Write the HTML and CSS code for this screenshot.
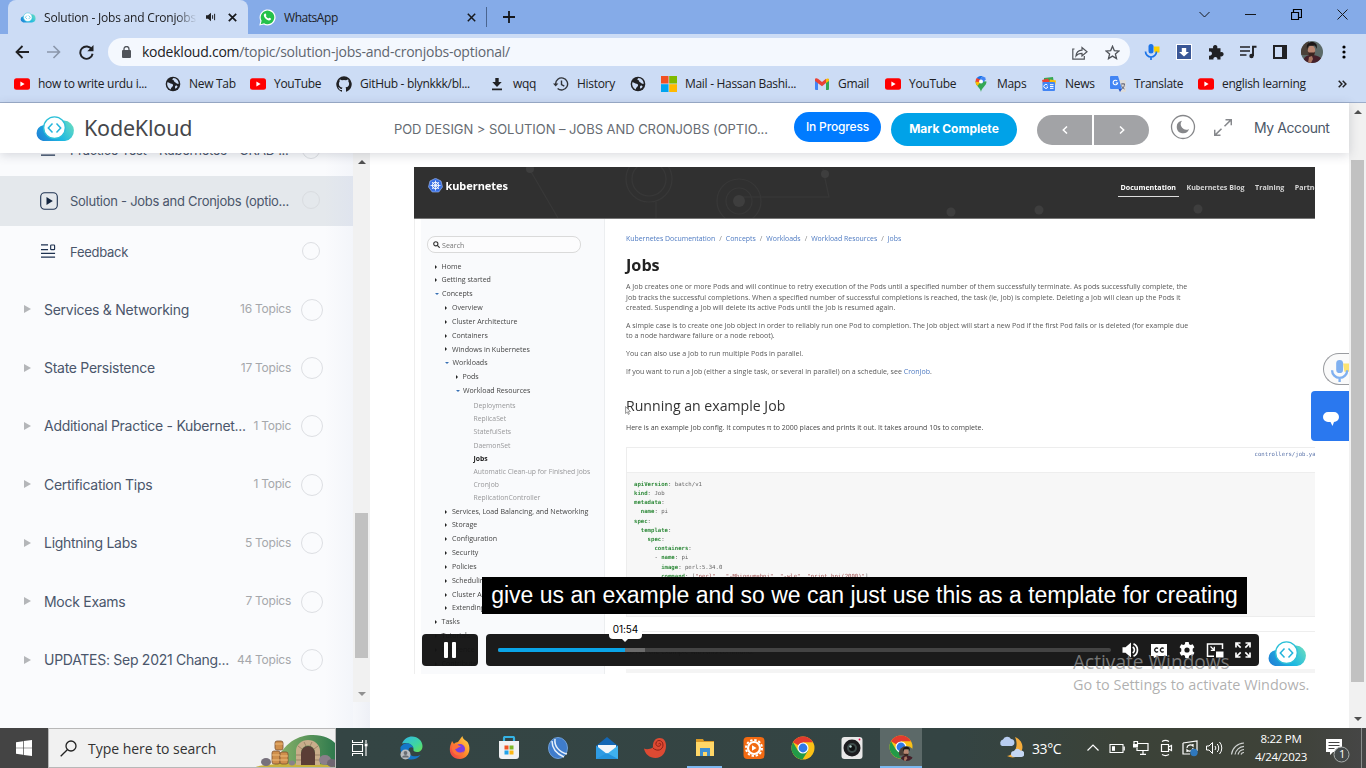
FILE: index.html
```html
<!DOCTYPE html>
<html lang="en">
<head>
<meta charset="utf-8">
<title>Solution - Jobs and Cronjobs</title>
<link rel="stylesheet" href="styles.css">
</head>
<body>
<svg class="defs" aria-hidden="true">
  <defs>
    <linearGradient id="gCloud" x1="0" y1=".7" x2="1" y2=".3"><stop offset="0" stop-color="#2084d6"/><stop offset=".5" stop-color="#1cb8e2"/><stop offset="1" stop-color="#62d9c4"/></linearGradient>
    <linearGradient id="gEdge" x1="0" y1="0" x2="1" y2="1"><stop offset="0" stop-color="#2fb6e8"/><stop offset=".6" stop-color="#3fd6a0"/><stop offset="1" stop-color="#6be04d"/></linearGradient>
    <linearGradient id="gFox" x1="1" y1="0" x2="0" y2="1"><stop offset="0" stop-color="#ffe14a"/><stop offset=".5" stop-color="#ff8a2a"/><stop offset="1" stop-color="#f0304e"/></linearGradient>
    <linearGradient id="gHill" x1="0" x2="1"><stop offset="0" stop-color="#8fb66b"/><stop offset="1" stop-color="#2f7a4d"/></linearGradient>
    <symbol id="cloud" viewBox="0 0 40 25">
      <path d="M8 25A8 8 0 0 1 8 9.300L29 4.500A10.300 10.300 0 0 1 30 25z" fill="url(#gCloud)"/>
      <circle cx="19.500" cy="11.700" r="10.800" fill="#fff" stroke="#2cc0d8" stroke-width="1.300"/>
      <path d="M17.500 7.500 13.300 12l4.200 4.500M21.500 7.500l4.200 4.500-4.200 4.500" fill="none" stroke="#22b4dc" stroke-width="1.500"/>
    </symbol>
    <symbol id="yt" viewBox="0 0 16 16"><rect y="2.300" width="16" height="11.400" rx="2.500" fill="#f00"/><path d="M6.400 5.600v4.800l4.200-2.400z" fill="#fff"/></symbol>
    <symbol id="globe" viewBox="0 0 16 16"><circle cx="8" cy="8" r="7.300" fill="#202124"/><path d="M2.300 6.300c2 .2 2.700 1.200 4.200 1.500 1.300.3 1.800 1 1.500 2-.4 1.300-2 1.400-2.300 3.700C3 12 1.600 9.500 2.300 6.300zM8.500 2c-1.500 1-1.400 2 0 2.300 1 .3.200 1.500 1.500 1.900 1.500.4 1.200 1.700 3.800 1.600C13.600 4.800 11.500 2.200 8.500 2zM11 9.500c1 0 1.700.6 1.500 1.300-.2.800-1 1.500-2 1.900-.8-.9-.7-3 .5-3.200z" fill="#ccdcf5"/></symbol>
    <symbol id="chrome" viewBox="0 0 24 24">
      <circle cx="12" cy="12" r="11.500" fill="#fbc116"/>
      <path d="M2 6.300A11.500 11.500 0 0 0 11.500 23.500L17 14.800 12 12 7 14.800z" fill="#229a48"/>
      <path d="M12 12 2 6.300A11.500 11.500 0 0 1 22 6.300H12z" fill="#e33b2e"/>
      <circle cx="12" cy="12" r="5.500" fill="#fff"/><circle cx="12" cy="12" r="4.400" fill="#3079e8"/>
    </symbol>
    <symbol id="face" viewBox="0 0 22 22">
      <clipPath id="fc"><circle cx="11" cy="11" r="11"/></clipPath>
      <g clip-path="url(#fc)"><path d="M0 0h22v22H0z" fill="#5c6a68"/><path d="M0 0h8v14H0z" fill="#4a4038"/><path d="M2 22c0-6 4-8 8-8s12 1 12 8z" fill="#45202a"/><ellipse cx="10.500" cy="9.500" rx="3.700" ry="5" fill="#b98772"/><path d="M6 8c-1-5 2-7 5-7s6 2 4.500 7c-.5-2-1-3-2-3.500-2 .6-5 .2-6 .3z" fill="#1b1616"/><path d="M7 10.500c1 1.500 2 1 3.500 1S13 12 14 10.500c0 3.500-1.500 5-3.500 5S7 14 7 10.500z" fill="#3a2420"/><path d="M8 16l3-1 1 3-2 4H7z" fill="#a87560"/></g>
    </symbol>
    <symbol id="mic" viewBox="0 0 16 16"><path d="M9.500 2.500h6v6h-5z" fill="#fdd000"/><rect x="4.500" y="0" width="5" height="9.500" rx="2.500" fill="#1a73e8"/><path d="M1.500 7.500a5.500 5.500 0 0 0 11 0M7 13v3" fill="none" stroke="#1a73e8" stroke-width="1.700"/></symbol>
    <symbol id="quiz" viewBox="0 0 16 16"><path d="M0 1h7.500M0 6h7.500M0 10h15M0 14h15" stroke="#1d3150" stroke-width="1.300"/><rect x="10.300" y="1" width="4.200" height="5" rx=".8" fill="none" stroke="#1d3150" stroke-width="1.200"/></symbol>
  </defs>
</svg>
<div class="screen">

  <div class="tabstrip">
    <div class="tab tab-active">
      <svg class="tab-fav" width="16" height="11"><use href="#cloud"/></svg>
      <span class="tab-title fade">Solution - Jobs and Cronjobs</span>
      <svg class="tab-audio" width="11" height="10" viewBox="0 0 11 10"><path d="M0 3.300h2L5 .7v8.600L2 6.700H0z" fill="#202124"/><path d="M6.600 3.200v3.600M8.600 1.800v6.400" stroke="#202124" stroke-width="1"/></svg>
      <svg class="tab-x" width="9" height="9" viewBox="0 0 9 9"><path d="M.8.800l7.400 7.400M8.200.8.800 8.200" stroke="#16181c" stroke-width="1.700"/></svg>
    </div>
    <div class="tab tab-second">
      <svg width="17" height="17" viewBox="0 0 17 17"><path d="M.3 16.500 1.400 12A8 8 0 1 1 4.800 15.500z" fill="#fff"/><path d="M1.700 15.200l.9-3.400a6.800 6.800 0 1 1 2.500 2.500z" fill="#25c14a"/><path d="M5.300 5c.5-.8 1.200-.7 1.500-.2l.6 1.400-.6.900c.6 1.200 1.400 1.900 2.600 2.400l.9-.8 1.700.8c.2 1.500-1.200 2.100-2.300 1.900C7.200 11 5 8.600 4.800 6.600c0-.7.200-1.200.5-1.600z" fill="#fff"/></svg>
      <span class="tab-title">WhatsApp</span>
      <svg class="tab-x2" width="9" height="9" viewBox="0 0 9 9"><path d="M.8.800l7.400 7.400M8.200.8.800 8.200" stroke="#16181c" stroke-width="1.500"/></svg>
    </div>
    <svg class="newtab" width="12" height="12" viewBox="0 0 12 12"><path d="M6 0v12M0 6h12" stroke="#16181c" stroke-width="1.800"/></svg>
    <div class="winbtns">
      <svg width="11" height="11" viewBox="0 0 11 11"><path d="M.5 3l5 5 5-5" fill="none" stroke="#16181c"/></svg>
      <svg width="11" height="11" viewBox="0 0 11 11"><path d="M0 5.500h11" stroke="#16181c"/></svg>
      <svg width="11" height="11" viewBox="0 0 11 11"><path d="M.5 3.500h7v7h-7zM2.500 3.500v-3h8v8H7.500" fill="none" stroke="#000" stroke-width="1.200"/></svg>
      <svg width="11" height="11" viewBox="0 0 11 11"><path d="M.5.500l10 10M10.500.500l-10 10" stroke="#16181c"/></svg>
    </div>
  </div>

  <div class="toolbar">
    <svg class="nav-ic" width="14" height="14" viewBox="0 0 14 14"><path d="M14 7H1.500M7.500 1 1.500 7l6 6" fill="none" stroke="#202124" stroke-width="1.800"/></svg>
    <svg class="nav-ic" width="14" height="14" viewBox="0 0 14 14"><path d="M0 7h12.500M6.500 1l6 6-6 6" fill="none" stroke="#8a96aa" stroke-width="1.600"/></svg>
    <svg class="nav-ic" width="15" height="15" viewBox="0 0 15 15"><path d="M12.800 4.400A6.200 6.200 0 1 0 13.600 8.800" fill="none" stroke="#202124" stroke-width="1.900"/><path d="M14.500 0v6.200H8.300z" fill="#202124"/></svg>
    <div class="omnibox">
      <svg width="9" height="12" viewBox="0 0 9 12"><rect y="4" width="9" height="8" rx="1" fill="#50545a"/><path d="M2 4.500V3a2.500 2.500 0 0 1 5 0v1.500" fill="none" stroke="#50545a" stroke-width="1.300"/></svg>
      <span class="url"><b>kodekloud.com</b>/topic/solution-jobs-and-cronjobs-optional/</span>
      <svg class="share" width="16" height="15" viewBox="0 0 16 15"><path d="M2.500 4H.8v10.200h11.500V11M4 11c.3-4 2.500-5.600 6-5.800V2.500L15 6.800 10 11V8.400C7.500 8.400 5.500 9 4 11z" fill="none" stroke="#50545a" stroke-width="1.200"/></svg>
      <svg width="15" height="15" viewBox="0 0 15 15"><path d="M7.500 1.300l1.800 4.300 4.700.4-3.600 3 1.100 4.600-4-2.500-4 2.500L4.600 9 1 6l4.700-.4z" fill="none" stroke="#50545a" stroke-width="1.300"/></svg>
    </div>
    <div class="ext">
      <svg width="16" height="16"><use href="#mic"/></svg>
      <svg width="16" height="16" viewBox="0 0 16 16"><path d="M0 0h16v16H0z" fill="#fff"/><path d="M1 1h14v14H1z" fill="#3a5796"/><path d="M5.800 4h4.400v4H13l-5 4.500L3 8h2.800z" fill="#fff"/></svg>
      <svg width="16" height="16" viewBox="0 0 16 16"><path d="M1 4.200h4.200a2.200 2.200 0 1 1 4 0h3.300v4a2.200 2.200 0 1 1 0 4v3.300H9.300a2 2 0 1 0-3.800 0H1v-4a2.100 2.100 0 1 0 0-3.800z" fill="#202124"/></svg>
      <svg width="17" height="14" viewBox="0 0 17 14"><path d="M0 2h10M0 6h10M0 10h6.500" stroke="#202124" stroke-width="1.700"/><path d="M13 11V1.800h3.500" fill="none" stroke="#202124" stroke-width="1.900"/><circle cx="11.500" cy="11" r="2.200" fill="#202124"/></svg>
      <svg width="14" height="14" viewBox="0 0 14 14"><path d="M0 0h14v14H0zM2 2v10h7V2z" fill="#202124" fill-rule="evenodd"/></svg>
      <svg width="22" height="22"><use href="#face"/></svg>
      <svg width="4" height="14" viewBox="0 0 4 14"><circle cx="2" cy="2" r="1.600"/><circle cx="2" cy="7" r="1.600"/><circle cx="2" cy="12" r="1.600"/></svg>
    </div>
  </div>

  <div class="bookmarks">
    <div class="bm"><svg><use href="#yt"/></svg><span>how to write urdu i...</span></div>
    <div class="bm"><svg><use href="#globe"/></svg><span>New Tab</span></div>
    <div class="bm"><svg><use href="#yt"/></svg><span>YouTube</span></div>
    <div class="bm"><svg viewBox="0 0 16 16"><path d="M8 .2a8 8 0 0 0-2.500 15.500c.4.100.5-.2.500-.4v-1.400c-2.200.5-2.700-1-2.700-1-.4-.9-.9-1.200-.9-1.200-.7-.5.1-.5.1-.5.800.1 1.200.8 1.200.8.700 1.300 1.900.9 2.300.7.100-.5.300-.9.500-1.100-1.800-.2-3.600-.9-3.600-4 0-.9.300-1.600.8-2.100-.1-.2-.4-1 .1-2.100 0 0 .7-.2 2.200.8a7.500 7.500 0 0 1 4 0c1.500-1 2.200-.8 2.200-.8.400 1.100.2 1.900.1 2.100.5.600.8 1.300.8 2.100 0 3.100-1.900 3.700-3.600 3.900.3.300.5.800.5 1.500v2.300c0 .2.100.5.500.4A8 8 0 0 0 8 .2z" fill="#202124"/></svg><span>GitHub - blynkkk/bl...</span></div>
    <div class="bm"><svg viewBox="0 0 16 16"><path d="M6.300 2h3.400v4h3L8 11 3.300 6h3zM3 12.500h10v1.800H3z" fill="#202124"/></svg><span>wqq</span></div>
    <div class="bm"><svg viewBox="0 0 16 16"><path d="M2.600 8a6 6 0 1 1 2 4.400M8.500 4.500V8.600l2.800 1.600" fill="none" stroke="#303338" stroke-width="1.400"/><path d="M0 7.500h5.400L2.700 10.500z" fill="#303338"/></svg><span>History</span></div>
    <div class="bm"><svg><use href="#globe"/></svg></div>
    <div class="bm"><svg viewBox="0 0 16 16"><path d="M0 0h7.500v7.500H0z" fill="#f25022"/><path d="M8.200 0H16v7.500H8.200z" fill="#7fba00"/><path d="M0 8.200h7.500V16H0z" fill="#00a4ef"/><path d="M8.200 8.200H16V16H8.200z" fill="#ffb900"/></svg><span>Mail - Hassan Bashi...</span></div>
    <div class="bm"><svg viewBox="0 0 16 16"><path d="M1 3h3v11H2a1 1 0 0 1-1-1z" fill="#4285f4"/><path d="M12 3h3v10a1 1 0 0 1-1 1h-2z" fill="#34a853"/><path d="M1 3.500C1 2 2.800 2 4 2.800l4 3.300 4-3.300V7l-4 3.300L1 5z" fill="#ea4335"/><path d="M12 3c1.200-1 3-.8 3 .8V5l-3 2z" fill="#fbbc04"/></svg><span>Gmail</span></div>
    <div class="bm"><svg><use href="#yt"/></svg><span>YouTube</span></div>
    <div class="bm"><svg viewBox="0 0 16 16"><path d="M8 16c-.6-4.500-5.500-6-5.500-10.500L8 5l5.500.5C13.500 10 8.600 11.500 8 16z" fill="#34a853"/><path d="M2.500 5.500c0 2 .8 3.200 1.800 4.500L9.500 4 6 2z" fill="#fbbc04"/><path d="M3.700 2.100A5.500 5.500 0 0 1 9.500.2L6 5z" fill="#1a73e8"/><path d="M3.700 2.100a5.400 5.400 0 0 0-1.200 3.600L6.500 6 8 4z" fill="#ea4335"/><path d="M9.500.2a5.500 5.500 0 0 1 3.500 3L9 7.500 7 3.500z" fill="#4285f4"/><circle cx="8" cy="5.500" r="2" fill="#fff"/></svg><span>Maps</span></div>
    <div class="bm"><svg viewBox="0 0 16 16"><path d="M3 2l9-1 1 7H3z" fill="#34a853"/><path d="M1 4l6-1.500L10 8H2z" fill="#ea4335"/><path d="M9 3.500l6 1-1 5H8z" fill="#fbbc04"/><rect x="1.500" y="6" width="12.500" height="9" rx="1" fill="#4285f4"/><path d="M6.500 9.200a2 2 0 1 0 .3 1.800H5.500M9 8.700h3.500M9 10.500h3.500M9 12.300h3.500" stroke="#fff" fill="none"/></svg><span>News</span></div>
    <div class="bm"><svg viewBox="0 0 16 16"><path d="M7 4h8a1 1 0 0 1 1 1v10a1 1 0 0 1-1 1h-5z" fill="#dcdcdc"/><path d="M11 8h4M13 7v1M11.500 13c2-1 3-3 3-5M11.500 9.500c.5 2 2 3 3 3.500" stroke="#667" fill="none"/><path d="M1 0h7l4 13H1a1 1 0 0 1-1-1V1a1 1 0 0 1 1-1z" fill="#4285f4"/><path d="M7.200 5a2.300 2.300 0 1 0 .5 2H5.700" stroke="#fff" stroke-width="1.100" fill="none"/><path d="M8.500 13H12l-2 3z" fill="#2a56c6"/></svg><span>Translate</span></div>
    <div class="bm"><svg><use href="#yt"/></svg><span>english learning</span></div>
    <svg class="more" width="9" height="8" viewBox="0 0 9 8"><path d="M.7.700 3.900 4 .7 7.300M4.700.7 7.900 4 4.700 7.300" fill="none" stroke="#202124" stroke-width="1.500"/></svg>
  </div>

  <div class="page">
    <div class="site">
      <header class="site-head">
        <svg class="logo" width="40" height="25"><use href="#cloud"/></svg>
        <span class="brand">KodeKloud</span>
        <span class="crumb">POD DESIGN &gt; SOLUTION – JOBS AND CRONJOBS (OPTIO...</span>
        <span class="status">In Progress</span>
        <span class="complete">Mark Complete</span>
        <span class="pager">
          <i><svg width="6" height="8" viewBox="0 0 6 8"><path d="M5 .500 1.300 4 5 7.500" fill="none" stroke="#fff" stroke-width="1.500"/></svg></i>
          <i><svg width="6" height="8" viewBox="0 0 6 8"><path d="M1 .500 4.700 4 1 7.500" fill="none" stroke="#fff" stroke-width="1.500"/></svg></i>
        </span>
        <svg class="moon" width="26" height="26" viewBox="0 0 26 26"><circle cx="13" cy="13" r="11.500" fill="none" stroke="#86878a" stroke-width="1.300"/><path d="M12 6.800a6.300 6.300 0 1 0 7 8.200 5.500 5.500 0 0 1-7-8.200z" fill="#86878a"/></svg>
        <svg class="expand" width="18" height="17" viewBox="0 0 18 17"><path d="M10.500 7.200 17 .900M7.500 9.800 1 16.100M11.500.700h5.800v5.600M.7 10.700v5.600h5.800" fill="none" stroke="#86888c" stroke-width="1.500"/></svg>
        <span class="account">My Account</span>
      </header>

      <div class="columns">
        <aside class="side">
          <div class="side-body">
            <div class="topic topic-first"><svg width="15" height="15"><use href="#quiz"/></svg><span>Practice Test - Kubernetes - CKAD ...</span><i></i></div>
            <div class="topic topic-on"><svg width="18" height="18" viewBox="0 0 18 18"><rect x=".7" y=".7" width="16.600" height="16.600" rx="4" fill="none" stroke="#1d3150" stroke-width="1.100"/><path d="M6.500 5v8l6.300-4z" fill="#14263f"/></svg><span>Solution - Jobs and Cronjobs (optio...</span><i></i></div>
            <div class="topic"><svg width="15" height="15"><use href="#quiz"/></svg><span>Feedback</span><i></i></div>
            <div class="sections">
              <div class="sec"><b></b><span>Services &amp; Networking</span><em>16 Topics</em><i></i></div>
              <div class="sec"><b></b><span>State Persistence</span><em>17 Topics</em><i></i></div>
              <div class="sec"><b></b><span>Additional Practice - Kubernet...</span><em>1 Topic</em><i></i></div>
              <div class="sec"><b></b><span>Certification Tips</span><em>1 Topic</em><i></i></div>
              <div class="sec"><b></b><span>Lightning Labs</span><em>5 Topics</em><i></i></div>
              <div class="sec"><b></b><span>Mock Exams</span><em>7 Topics</em><i></i></div>
              <div class="sec"><b></b><span>UPDATES: Sep 2021 Chang...</span><em>44 Topics</em><i></i></div>
            </div>
          </div>
          <div class="side-scroll"><span class="up"></span><span class="side-thumb"></span><span class="down"></span></div>
        </aside>

        <main class="main">
          <div class="video">
            <div class="frame">
              <div class="k-head">
                <svg class="k-deco" width="901" height="51" viewBox="0 0 901 51"><g fill="none" stroke="#383838" stroke-width="1.200"><circle cx="235" cy="12" r="23"/><circle cx="235" cy="12" r="17"/><path d="M116 3l28 48M242 35v16M325 30h90l-6-28"/><circle cx="325" cy="34" r="22"/><circle cx="325" cy="34" r="13"/></g><g fill="#3e3e3e"><circle cx="116" cy="2" r="4"/><circle cx="411" cy="7" r="4"/><circle cx="325" cy="34" r="6"/><circle cx="537" cy="45" r="4.500"/><circle cx="625" cy="43" r="4.500"/><circle cx="784" cy="42" r="4.500"/></g></svg>
                <svg class="k-logo" width="15" height="15" viewBox="0 0 15 15"><path d="M7.500.300 13 3l1.500 6-3.700 5H4.200L.5 9 2 3z" fill="#3970e4" stroke="#aac3f5" stroke-width=".6"/><circle cx="7.500" cy="7.500" r="3.200" fill="none" stroke="#fff"/><path d="M7.500 2.500v10M2.500 7.500h10M4 4l7 7M11 4l-7 7" stroke="#fff" stroke-width=".8"/></svg>
                <span class="k-name">kubernetes</span>
                <nav class="k-nav"><a class="on">Documentation</a><a>Kubernetes Blog</a><a>Training</a><a>Partne</a></nav>
              </div>
              <div class="k-body">
                <div class="k-side">
                  <div class="k-search"><svg width="7" height="7" viewBox="0 0 7 7"><circle cx="2.800" cy="2.800" r="2.100" fill="none" stroke="#333" stroke-width="1.100"/><path d="M4.300 4.300 6.700 6.700" stroke="#333" stroke-width="1.200"/></svg>Search</div>
                  <ul class="tree">
                    <li>Home</li><li>Getting started</li><li class="open">Concepts</li>
                    <li class="l2">Overview</li><li class="l2">Cluster Architecture</li><li class="l2">Containers</li><li class="l2">Windows in Kubernetes</li><li class="l2 open">Workloads</li>
                    <li class="l3">Pods</li><li class="l3 open">Workload Resources</li>
                    <li class="leaf first">Deployments</li><li class="leaf">ReplicaSet</li><li class="leaf">StatefulSets</li><li class="leaf">DaemonSet</li><li class="leaf current">Jobs</li><li class="leaf">Automatic Clean-up for Finished Jobs</li><li class="leaf">CronJob</li><li class="leaf">ReplicationController</li>
                    <li class="l2">Services, Load Balancing, and Networking</li><li class="l2">Storage</li><li class="l2">Configuration</li><li class="l2">Security</li><li class="l2">Policies</li><li class="l2">Scheduling, Preemption</li><li class="l2">Cluster Administration</li><li class="l2">Extending Kubernetes</li>
                    <li>Tasks</li><li>Tutorials</li><li>Reference</li><li>Contribute</li>
                  </ul>
                </div>
                <div class="k-doc">
                  <div class="k-crumbs"><a>Kubernetes Documentation</a><a>Concepts</a><a>Workloads</a><a>Workload Resources</a><a>Jobs</a></div>
                  <h1>Jobs</h1>
                  <p>A Job creates one or more Pods and will continue to retry execution of the Pods until a specified number of them successfully terminate. As pods successfully complete, the<br>Job tracks the successful completions. When a specified number of successful completions is reached, the task (ie, Job) is complete. Deleting a Job will clean up the Pods it<br>created. Suspending a Job will delete its active Pods until the Job is resumed again.</p>
                  <p>A simple case is to create one Job object in order to reliably run one Pod to completion. The Job object will start a new Pod if the first Pod fails or is deleted (for example due<br>to a node hardware failure or a node reboot).</p>
                  <p>You can also use a Job to run multiple Pods in parallel.</p>
                  <p>If you want to run a Job (either a single task, or several in parallel) on a schedule, see <a>CronJob</a>.</p>
                  <h2>Running an example Job</h2>
                  <p class="intro">Here is an example Job config. It computes π to 2000 places and prints it out. It takes around 10s to complete.</p>
                  <div class="code">
                    <div class="code-head">controllers/job.ya</div>
                    <div class="yaml">
                      <div><b>apiVersion</b>: batch/v1</div>
                      <div><b>kind</b>: Job</div>
                      <div><b>metadata</b>:</div>
                      <div>  <b>name</b>: pi</div>
                      <div><b>spec</b>:</div>
                      <div>  <b>template</b>:</div>
                      <div>    <b>spec</b>:</div>
                      <div>      <b>containers</b>:</div>
                      <div>      - <b>name</b>: pi</div>
                      <div>        <b>image</b>: perl:5.34.0</div>
                      <div>        <b>command</b>: [<s>"perl"</s>,  <s>"-Mbignum=bpi"</s>, <s>"-wle"</s>, <s>"print bpi(2000)"</s>]</div>
                    </div>
                  </div>
                  <div class="run"><span>To run the example with this command:</span></div>
                  <div class="strip"></div>
                </div>
              </div>
              <svg class="pointer" width="6" height="9" viewBox="0 0 6 9"><path d="M.5.500v7l1.700-1.400 1.200 2.400 1-.5-1.100-2.300 2.200-.2z" fill="#eee" stroke="#777" stroke-width=".7"/></svg>
            </div>
            <div class="caption">give us an example and so we can just use this as a template for creating</div>
            <div class="controls">
              <div class="play"><svg width="12" height="16" viewBox="0 0 12 16"><rect width="4" height="16" rx="1" fill="#fff"/><rect x="8" width="4" height="16" rx="1" fill="#fff"/></svg></div>
              <div class="bar">
                <div class="track"><span class="loaded"></span><span class="played"></span><span class="tip">01:54</span></div>
                <svg width="18" height="18" viewBox="0 0 18 18"><path d="M.5 6.300h3L9 1.500v15L3.500 11.700h-3z" fill="#fff"/><path d="M10.700 6a3.500 3.500 0 0 1 0 6M11.500 2.700a7 7 0 0 1 0 12.600" fill="none" stroke="#fff" stroke-width="1.700"/></svg>
                <svg width="18" height="18" viewBox="0 0 18 18"><path d="M1 3h16v12H8l-4 2-.5-2H1z" fill="#fff"/><path d="M8 7.500a2 2 0 1 0 0 3M13.700 7.500a2 2 0 1 0 0 3" fill="none" stroke="#171717" stroke-width="1.400"/></svg>
                <svg width="18" height="18" viewBox="0 0 18 18"><path d="M7.300 1h3.400l.4 2.200 1.500.8 2.100-.8 1.700 3-1.700 1.500v2.600l1.700 1.500-1.700 3-2.100-.8-1.500.8-.4 2.200H7.300l-.4-2.200-1.500-.8-2.100.8-1.700-3 1.700-1.500V7.700L1.600 6.200l1.700-3 2.100.8 1.500-.8z" fill="#fff"/><circle cx="9" cy="9" r="2.600" fill="#171717"/></svg>
                <svg width="18" height="18" viewBox="0 0 18 18"><path d="M8 15.300H1.500V3h15v5" fill="none" stroke="#fff" stroke-width="1.500"/><path d="M10 10.500h7.500v6H10z" fill="#fff"/><path d="M4.500 5.500 8 9M8.300 5.800v3.500H4.800" fill="none" stroke="#fff" stroke-width="1.300"/></svg>
                <svg width="18" height="18" viewBox="0 0 18 18"><path d="M2 6.500V2h4.500M2 2l4.700 4.700M11.500 2H16v4.500M16 2l-4.700 4.700M2 11.500V16h4.500M2 16l4.700-4.700M16 11.500V16h-4.500M16 16l-4.700-4.700" fill="none" stroke="#fff" stroke-width="1.700"/></svg>
              </div>
              <svg class="ctl-logo" width="40" height="25"><use href="#cloud"/></svg>
            </div>
          </div>
        </main>
      </div>
      <div class="voice"><svg width="22" height="22"><use href="#mic"/></svg></div>
      <div class="chat"><svg width="16" height="14" viewBox="0 0 16 14"><path d="M5 0h6a4.800 4.800 0 0 1 0 10l-1.500 4-2-4H5A5 5 0 0 1 5 0z" fill="#fff"/></svg></div>
      <div class="watermark"><div>Activate Windows</div><p>Go to Settings to activate Windows.</p></div>
    </div>
    <div class="page-scroll"><span class="up"></span><span class="page-thumb"></span><span class="down"></span></div>
  </div>

  <div class="taskbar">
    <div class="start"><svg width="16" height="16" viewBox="0 0 16 16"><path d="M0 2.300 7 1.200v6.500H0zM7.700 1.100 16 0v7.700H7.700zM0 8.300h7v6.500l-7-1zM7.700 8.300H16V16l-8.300-1.100z" fill="#fff"/></svg></div>
    <div class="search">
      <svg width="17" height="17" viewBox="0 0 17 17"><circle cx="11" cy="6" r="5" fill="none" stroke="#222" stroke-width="1.300"/><path d="M7.300 9.700.7 16.300" stroke="#222" stroke-width="1.300"/></svg>
      <span>Type here to search</span>
      <svg class="scene" width="79" height="32" viewBox="0 0 79 32"><path d="M18 32C26 8 42 0 57 0c11 0 18 4 22 8v24z" fill="url(#gHill)"/><path d="M0 32c8-4 70-5 79 0z" fill="#c8b33e"/><path d="M40 30V16a11 10 0 0 1 24 0v14h-5V18a6.500 7 0 0 0-14 0v12z" fill="#c9ad8b"/><path d="M45 30V18a7 7 0 0 1 14 0v12z" fill="#5b3d36"/><g stroke="#8b7257" stroke-width=".7"><path d="M40 20h5M40 25h5M59 20h5M59 25h5M42 11l4 3M48 7l2 4M56 7l-2 4M62 11l-4 3"/></g><g fill="#cf8f4c" stroke="#7c5130" stroke-width=".8"><rect x="19" y="6" width="8" height="9" rx="2"/><rect x="16" y="16" width="8" height="13" rx="2"/><rect x="24" y="17" width="8" height="12" rx="2"/></g><path d="M19 9h8M16 20h8M24 21h8M16 25h8M24 25h8" stroke="#f0c080" stroke-width=".9"/><ellipse cx="10" cy="27" rx="5" ry="4" fill="#77717c"/><ellipse cx="69" cy="25" rx="6" ry="5" fill="#8b7f89"/><ellipse cx="76" cy="28" rx="5" ry="4" fill="#6f6671"/><ellipse cx="36" cy="28" rx="3" ry="2.500" fill="#8a8288"/></svg>
    </div>
    <div class="view"><svg width="16" height="16" viewBox="0 0 16 16"><path d="M.5 4.500h10v7H.5zM.5 0v2.500h10V0M.5 16v-2.500h10V16M14 0v3M14 6v10" fill="none" stroke="#fff" stroke-width="1.100"/><path d="M12.700 3.500h2.800v2.800h-2.800z" fill="#fff"/></svg></div>
    <div class="apps">
      <div><svg width="24" height="24" viewBox="0 0 24 24"><path d="M3 7.500C5 3 9 .500 13 .500c6 0 10.500 4.500 10.500 9.500 0 4-2.500 6-5.500 6-2.500 0-4-1-3.500-2.500C15 9 9 5.500 3 7.500z" fill="url(#gEdge)"/><path d="M1.500 11C5 5 13 6.500 14.500 12c-2-1.500-5-1-5 2.500 0 5 6 7.500 12 4.500-3 4-8.500 5.500-12.500 4C3.500 21.500 1 16 1.500 11z" fill="#1577c8"/><circle cx="6.500" cy="18.500" r="5" fill="#b9bcc0"/><circle cx="6.500" cy="17" r="1.900" fill="#6a6e74"/><path d="M3 21.500c.5-3 6.500-3 7 0z" fill="#6a6e74"/></svg></div>
      <div><svg width="24" height="24" viewBox="0 0 24 24"><path d="M14.500 0c0 3 3 4 5 6 3.500 5 3 16-7.500 17C4 23 1 17 2 11c.3-2 1.500-4 2-6l2 3c1-2 3-1.500 4-2 1-.7 2-3.500 4.500-6z" fill="url(#gFox)"/><circle cx="12" cy="13" r="5" fill="#7b3ee0"/><path d="M5 9c3-1 6 0 8 2-3-.5-3 2-6 2 1 3 5 5 9 2-1 5-8 6-11 1-1.500-3-1-5 0-7z" fill="#ff7139"/></svg></div>
      <div><svg width="22" height="24" viewBox="0 0 22 24"><path d="M6 7V2a1 1 0 0 1 1-1h8a1 1 0 0 1 1 1v5" fill="none" stroke="#35b3e4" stroke-width="2.200"/><path d="M1 5h20v15a3 3 0 0 1-3 3H4a3 3 0 0 1-3-3z" fill="#f0f2f4"/><path d="M6.500 9.500h4v4h-4z" fill="#f05323"/><path d="M11.500 9.500h4v4h-4z" fill="#7db928"/><path d="M6.500 14.500h4v4h-4z" fill="#1fa3ec"/><path d="M11.500 14.500h4v4h-4z" fill="#fdb813"/></svg></div>
      <div><svg width="22" height="24" viewBox="0 0 22 24"><ellipse cx="11" cy="12" rx="9.500" ry="10.500" fill="#3f7ccb" stroke="#6fa0d8"/><path d="M8 3c-1 7 4 13 12 15M5 5c0 8 5 13 12 16" fill="none" stroke="#e6f0fb" stroke-width="1.500"/></svg></div>
      <div><svg width="22" height="24" viewBox="0 0 22 24"><path d="M0 10 11 1l11 9v12H0z" fill="#1467b4"/><path d="M2 9h18v9H2z" fill="#f3f6f9"/><path d="M0 9.500 11 18v5H0z" fill="#2f9ce4"/><path d="M22 9.500 11 18v5h11z" fill="#3fb2ee"/><path d="M0 23 11 17l11 6z" fill="#2493dc"/></svg></div>
      <div><svg width="23" height="22" viewBox="0 0 23 22"><path d="M0 11.500c3 1.500 6 .5 9-1C8.500 5 11 1 15.500 1 20 1 22 4.500 22 8.500 22 16 18 21 11.500 21 5.500 21 1 17 0 11.500z" fill="#dd4a33"/><path d="M9 11c4 4 10 2 10-3 0-3-2-4.500-4-4.500s-3.500 2-3 4 3.500 2.500 4.500.7-1-2.500-2-1.300" fill="none" stroke="#8c1f16" stroke-width="1"/></svg></div>
      <div class="app-open"><svg width="20" height="20" viewBox="0 0 20 20"><path d="M1 1h7l1 2h10v3H1z" fill="#d99a27"/><path d="M1 4h18v14H1z" fill="#ffd767"/><path d="M5 18V10h10v8h-3v-4H8v4z" fill="#3f8fd0"/></svg></div>
      <div><svg width="22" height="24" viewBox="0 0 22 24"><rect x=".5" y="1" width="21" height="22" rx="4" fill="#f26a12"/><circle cx="11" cy="12" r="8" fill="none" stroke="#fff" stroke-width="2" stroke-dasharray="2.400 1.790"/><circle cx="11" cy="12" r="6" fill="none" stroke="#fff" stroke-width="2.200"/><path d="M9 9.300v5.400l4.500-2.700z" fill="#fff"/></svg></div>
      <div><svg width="24" height="24"><use href="#chrome"/></svg></div>
      <div><svg width="22" height="24" viewBox="0 0 22 24"><rect x=".5" y="1" width="21" height="22" rx="3" fill="#e9e9e9"/><circle cx="11" cy="12" r="8.500" fill="#1c1c1f"/><circle cx="11" cy="12" r="5" fill="#3d4b4a"/><circle cx="11" cy="12" r="3" fill="#101214"/><circle cx="9.500" cy="10.500" r="1.200" fill="#b9d8d4"/><circle cx="18.500" cy="3.500" r=".9" fill="#e04"/></svg></div>
      <div class="app-on"><svg width="24" height="24"><use href="#chrome"/></svg><svg class="app-face" width="15" height="15"><use href="#face"/></svg></div>
    </div>
    <div class="weather"><svg width="25" height="24" viewBox="0 0 25 24"><path d="M16 1c8 3 10 12 4 18-3 3-8 3-12 1 8-1 12-10 8-19z" fill="#f5ac3b"/><path d="M3 10a3.500 3.500 0 0 1 1-6.500A4.500 4.500 0 0 1 12 3a3.600 3.600 0 0 1 1 7z" fill="#b8cdf0"/><path d="M15 21a3 3 0 0 1 0-6 3.700 3.700 0 0 1 6.500-.5 3.200 3.200 0 0 1 1 6.500z" fill="#c5d7f4"/></svg><span>33°C</span></div>
    <div class="tray">
      <svg viewBox="0 0 18 18"><path d="M3.500 11.500 9 6l5.500 5.500" fill="none" stroke="#fff" stroke-width="1.200"/></svg>
      <svg viewBox="0 0 18 18"><path d="M2 5.500h13v8H2zM16.300 7.500v4" fill="none" stroke="#fff" stroke-width="1.100"/><path d="M4 7.200h3v4.600H4z" fill="#fff"/></svg>
      <svg viewBox="0 0 18 18"><path d="M6 4.500h10v7H5V9M11 11.500v3.500M8 15.300h6M2 6.500V2.500h3.500v4" fill="none" stroke="#fff" stroke-width="1.200"/><path d="M1 5h5v3.500H1z" fill="#fff"/></svg>
      <svg viewBox="0 0 18 18"><path d="M4.500 5.500h7v7h-7zM11.500 8l3-1.500v5l-3-1.500M5 2.500c2-1.200 5-1.200 7 0M5 15.500c2 1.200 5 1.200 7 0" fill="none" stroke="#fff" stroke-width="1.200"/></svg>
      <svg viewBox="0 0 18 18"><path d="M2 4l14-2v10M9 15H2V4" fill="none" stroke="#fff" stroke-width="1.200"/><path d="M6 9c0-3 4-4 6-2V5M12 9c0 3-4 4-6 2v2" fill="none" stroke="#fff" stroke-width="1.200"/><circle cx="13" cy="13.500" r="3.700" fill="#2f78bd"/></svg>
      <svg viewBox="0 0 18 18"><path d="M1.500 7H4l3.500-3.500v11L4 11H1.500z" fill="none" stroke="#fff"/><path d="M10 7a3 3 0 0 1 0 4M12.200 5a6 6 0 0 1 0 8M14.500 3a9 9 0 0 1 0 12" fill="none" stroke="#fff"/></svg>
      <svg viewBox="0 0 18 18"><path d="M2.500 15.500A13 13 0 0 1 15 4M6 15.500A10 10 0 0 1 15 7.300M9 15.500a7 7 0 0 1 6-5M12 15.500a3 3 0 0 1 3-2" fill="none" stroke="#cfd2d0" stroke-width="1.200"/></svg>
    </div>
    <div class="clock"><span>8:22 PM</span><span>4/24/2023</span></div>
    <div class="notice"><svg width="26" height="26" viewBox="0 0 26 26"><path d="M1 2h16v13h-9l-3 3v-3H1z" fill="#fff"/><path d="M3.500 5.500h11M3.500 8.500h11M3.500 11.500h6" stroke="#444"/><circle cx="16.500" cy="17.500" r="7.500" fill="#44494a" stroke="#a9adac"/></svg><b>1</b></div>
  </div>
</div>
</body>
</html>
```
FILE: styles.css
```css
* { box-sizing: border-box; }
body { margin: 0; font-family: "Open Sans", "Noto Sans", sans-serif; color: #202124; }
.defs { position: absolute; width: 0; height: 0; }
svg { display: block; flex: none; }
.screen { width: 1366px; height: 768px; overflow: hidden; display: flex; flex-direction: column; white-space: nowrap; }

/* browser tabs */
.tabstrip { height: 34px; background: #85abe8; display: flex; align-items: center; }
.tab { display: flex; align-items: center; height: 34px; font-size: 12px; }
.tab-active { width: 240px; margin-left: 8px; padding-left: 12px; background: #ccdcf5; border-radius: 8px 8px 0 0; }
.tab-title { letter-spacing: -.2px; }
.tab-active .tab-title { width: 153px; margin-left: 8px; overflow: hidden; }
.fade { -webkit-mask-image: linear-gradient(90deg, #000 86%, transparent 100%); mask-image: linear-gradient(90deg, #000 86%, transparent 100%); }
.tab-audio { margin-left: 9px; }
.tab-x { margin-left: 11px; }
.tab-second { width: 239px; padding-left: 11px; background: linear-gradient(#4a6590, #4a6590) right 7px / 1px 20px no-repeat; }
.tab-second .tab-title { margin-left: 8px; width: 183px; letter-spacing: -.45px; }
.newtab { margin-left: 16px; }
.winbtns { margin-left: auto; display: flex; gap: 35px; padding: 0 18px 5px 0; }

/* address bar */
.toolbar { height: 36px; background: #ccdcf5; display: flex; align-items: center; padding-left: 15px; }
.nav-ic { margin-right: 18px; }
.omnibox { width: 1022px; height: 28px; margin-left: -4px; border-radius: 14px; background: #f4f8fe; display: flex; align-items: center; padding: 0 10px 0 14px; }
.url { flex: 1; margin-left: 11px; padding-bottom: 1px; font-size: 14px; letter-spacing: -.24px; color: #5f6670; }
.url b { font-weight: 400; color: #202124; }
.share { margin-right: 17px; }
.ext { flex: 1; display: grid; grid-template-columns: 32px 32px 32px 32px 32px 32px 32px; justify-items: center; align-items: center; padding-left: 6px; }

/* bookmarks */
.bookmarks { height: 33px; background: #ccdcf5; border-bottom: 1px solid #9cadca; display: grid; grid-template-columns: 151px 85px 86px 153px 64px 77px 31px 153px 71px 88px 68px 69px 88px 140px auto; align-items: center; padding: 0 0 5px 14px; font-size: 12px; }
.bm { display: flex; align-items: center; gap: 8px; letter-spacing: -.3px; }
.bm svg { width: 16px; height: 16px; }

/* web page area */
.page { height: 625px; display: flex; }
.site { width: 1349px; position: relative; display: flex; flex-direction: column; background: #fff; font-family: Inter, sans-serif; }
.site-head { height: 50px; background: #fff; display: flex; align-items: center; padding-left: 35px; position: relative; z-index: 2; box-shadow: 0 2px 10px rgba(60,65,85,.2); }
.brand { width: 309px; padding: 0 0 2px 9px; font: 400 21.500px "Noto Sans", sans-serif; color: #45474b; letter-spacing: -.2px; }
.crumb { width: 400px; margin-left: 10px; margin-top: 2px; font-size: 13px; letter-spacing: -.06px; color: #666b72; }
.status { width: 87px; height: 30px; margin-top: -2px; padding-bottom: 1px; border-radius: 15px; background: #007bff; color: #fff; font-size: 12px; font-weight: 500; letter-spacing: -.15px; display: grid; place-items: center; }
.complete { width: 126px; height: 33px; margin: 2px 0 0 10px; padding-bottom: 1px; border-radius: 17px; background: #00a2e8; color: #fff; font-size: 12px; font-weight: 700; display: grid; place-items: center; }
.pager { display: flex; gap: 2px; margin: 4px 0 0 20px; }
.pager i { width: 55px; height: 30px; background: #a2a3a6; display: grid; place-items: center; border-radius: 15px 0 0 15px; }
.pager i + i { border-radius: 0 15px 15px 0; }
.moon { margin: -2px 0 0 21px; }
.expand { margin-left: 18px; margin-bottom: 1px; }
.account { margin-left: 22px; margin-bottom: 1px; font-size: 14px; letter-spacing: -.42px; color: #4c5768; }
.columns { flex: 1; display: flex; min-height: 0; }

/* course outline */
.side { width: 370px; display: flex; background: linear-gradient(90deg, #fafbfd 93%, #eef0f6); }
.side-body { width: 353px; height: 575px; overflow: hidden; background: linear-gradient(90deg, #fafbfd 92%, #f3f5fa); }
.topic { height: 50px; display: flex; align-items: center; padding-left: 41px; color: #4a566b; font-size: 13px; }
.topic span { width: 233px; margin-left: 14px; letter-spacing: -.27px; padding-top: 1px; }
.topic i, .sec i { flex: none; border: 1.500px solid #dddfe3; border-radius: 50%; }
.topic i { width: 18px; height: 18px; margin-left: -1px; }
.topic-first { margin-top: -27px; height: 50px; padding-bottom: 3px; }
.topic-on { background: linear-gradient(90deg, #e4e8ec 92%, #dfe4ee); padding-left: 40px; padding-bottom: 1px; }
.topic-on span { margin-left: 12px; }
.topic-on i { margin-bottom: 2px; border-color: #d9dce0; }
.sections { padding-top: 4px; }
.sec { height: 58.400px; display: flex; align-items: center; padding-left: 24px; font-size: 14px; color: #4a566b; }
.sec b { border-left: 7px solid #b4b6b9; border-top: 4.500px solid transparent; border-bottom: 4.500px solid transparent; }
.sec span { flex: 1; margin-left: 13px; letter-spacing: -.28px; }
.sec em { font-style: normal; font-size: 12px; color: #a5a7ab; letter-spacing: -.25px; padding-bottom: 1px; }
.sec i { width: 22px; height: 22px; margin: 1px 30px 0 10px; }
.side-scroll { width: 17px; height: 549px; background: #f1f1f1; display: flex; flex-direction: column; align-items: center; }
.side-thumb { width: 13px; height: 145px; margin-top: auto; background: #c1c1c1; }
.up, .down { border: 4px solid transparent; border-top: 0; border-bottom-color: #505050; height: 4px; margin-top: 7px; }
.down { border-top: 4px solid #909090; border-bottom: 0; margin: 35px 0 5px; }
.side-scroll .down { margin: 34px 0 6px; }

/* video player */
.main { padding: 14px 0 0 44px; }
.video { position: relative; width: 901px; height: 507px; }
.frame { position: relative; width: 901px; height: 507px; overflow: hidden; background: #fff; font-family: "Open Sans", sans-serif; filter: blur(.35px); }
.k-head { height: 52px; position: relative; background: #303030; border-bottom: 1px solid #777; display: flex; align-items: flex-start; padding-top: 10.500px; }
.k-deco { position: absolute; inset: 0; }
.k-logo { margin-left: 14px; position: relative; }
.k-name { margin-left: 2.500px; width: 672px; flex: none; font: 700 11px/15px "Noto Sans", sans-serif; color: #fff; letter-spacing: -.05px; }
.k-nav { display: flex; flex: none; color: #d5d5d5; font-size: 7.100px; font-weight: 700; line-height: 18px; }
.k-nav a { margin-right: 10.500px; }
.k-nav .on { padding: 0 3px; margin-right: 7.500px; color: #fff; border-bottom: 1px solid #ddd; }
.k-body { display: flex; height: 455px; border-left: 1px solid #eee; }
.k-side { width: 184px; margin-left: 6px; background: #f9fafc; border-right: 1px solid #eceef0; padding: 17px 0 0 6px; }
.k-search { width: 154px; height: 17px; border: 1px solid #dadada; border-radius: 8px; background: #fcfcfd; display: flex; align-items: center; gap: 2px; padding-left: 5px; font-size: 7.100px; color: #777; }
.tree { margin: 6.600px 0 0; padding: 0; list-style: none; font-size: 7.070px; color: #444; }
.tree li { height: 13.830px; line-height: 13.830px; display: flex; align-items: center; padding-left: 7.500px; }
.tree li::before { content: ""; margin-right: 5px; border: 2px solid transparent; border-left: 2.500px solid #222; border-right: 0; }
.tree li.open::before { border: 2px solid transparent; border-top: 2.500px solid #3970b4; border-bottom: 0; margin-right: 3.500px; }
.tree li.l2 { padding-left: 18px; }
.tree li.l3 { padding-left: 28.500px; }
.tree li.leaf { height: 13.220px; line-height: 13.220px; padding-left: 46.500px; color: #98989a; font-size: 6.800px; }
.tree li.leaf::before { display: none; }
.tree li.first { margin-top: 1px; }
.tree li.current { color: #222; font-weight: 700; }
.k-doc { flex: 1; min-width: 0; padding: 14.700px 0 0 21px; color: #585858; }
.k-crumbs { height: 10px; font-size: 6.930px; line-height: 10px; color: #4f7bc2; display: flex; }
.k-crumbs a + a::before { content: "/"; color: #888; padding: 0 4px; }
.k-doc h1 { margin: 8.500px 0 0; font-size: 16.200px; line-height: 26px; color: #222; font-weight: 700; }
.k-doc p { margin: 3px 0 7.200px; font-size: 7.050px; line-height: 10.500px; }
.k-doc p + p { margin-top: 0; }
.k-doc p a { color: #4f7bc2; }
.k-doc h2 { margin: 18.200px 0 0; font-size: 14.120px; line-height: 24px; font-weight: 400; color: #333; }
.k-doc .intro { margin: 4px 0 13.800px; color: #484848; font-size: 7.030px; }
.code { height: 170px; margin-left: -.5px; border: 1px solid #ededed; border-right: 0; background: #f7f7f7; font-family: "DejaVu Sans Mono", monospace; font-size: 5.650px; }
.code-head { height: 25px; background: #fff; border-bottom: 1px solid #eee; padding-left: 628px; line-height: 12px; color: #5a73aa; }
.yaml { margin: 7px 0 0 7.500px; color: #666; }
.yaml div { height: 9.220px; line-height: 9.220px; white-space: pre; }
.code b { color: #2f8a3a; }
.code s { text-decoration: none; color: #a05050; }
.run { height: 38px; margin-top: 14px; border-top: 1px solid #eee; font-size: 6.900px; line-height: 40px; }
.strip { height: 4px; background: #f4f4f4; }
.pointer { position: absolute; left: 211px; top: 239px; }
.caption { position: absolute; left: 68px; top: 410px; width: 765px; height: 37px; background: #000; color: #fff; font: 23px/37px "Liberation Sans", Arial, sans-serif; text-align: center; }
.controls { position: absolute; left: 8px; top: 467px; display: flex; height: 32px; }
.play { width: 56px; border-radius: 4px; background: rgba(20,20,20,.97); display: grid; place-items: center; }
.bar { width: 773px; margin-left: 8px; border-radius: 4px; background: rgba(20,20,20,.97); display: flex; align-items: center; gap: 10px; padding-left: 12px; }
.track { position: relative; width: 613px; height: 4px; border-radius: 2px; background: #444; }
.bar > svg:nth-child(2) { margin-left: 1px; }
.loaded, .played { position: absolute; left: 0; top: 0; height: 4px; border-radius: 2px 0 0 2px; }
.loaded { width: 147px; background: #6b6b6b; }
.played { width: 127px; background: #0aa5e8; }
.tip { position: absolute; left: 111px; top: -28px; width: 33px; height: 19px; border-radius: 4px; background: #fff; color: #000; font: 10px/19px Inter, sans-serif; letter-spacing: -.1px; text-align: center; }
.tip::after { content: ""; position: absolute; left: 12px; top: 18px; border: 4px solid transparent; border-top-color: #fff; border-bottom: 0; }
.ctl-logo { margin: 7px 0 0 8px; }

/* floating widgets over the page */
.voice { position: absolute; right: 0; top: 250px; width: 26px; height: 32px; border: 1px solid #9a9ca0; border-right: 0; border-radius: 16px 0 0 16px; background: #fafafa; overflow: hidden; padding: 6px 0 0 6px; }
.voice svg { opacity: .55; }
.chat { position: absolute; right: 0; top: 288px; width: 38px; height: 50px; border-radius: 4px 0 0 4px; background: #2a78ef; display: grid; place-items: center; padding: 6px 0 0 2px; }
.watermark { position: absolute; left: 1073px; top: 547px; font-family: "Open Sans", sans-serif; color: rgba(150,150,150,.75); }
.watermark div { font-size: 19.100px; line-height: 24px; }
.watermark p { margin: 1px 0 0; font-size: 14.430px; line-height: 20px; }
.page-scroll { width: 17px; background: #f1f1f1; display: flex; flex-direction: column; align-items: center; }
.page-thumb { width: 13px; height: 522px; margin-top: 46px; background: #c1c1c1; }
.page-scroll .down { border-top-color: #505050; }

/* taskbar */
.taskbar { height: 40px; display: flex; align-items: center; background: linear-gradient(90deg, #444 0, #444 48px, #344544 336px, #344443 70%, #3b4238 82%, #3e4238 94%, #464646); color: #fff; }
.start { width: 48px; display: grid; place-items: center; }
.search { width: 288px; height: 40px; background: #f1f1f1; border: 1px solid #b8b8b8; color: #333; display: flex; align-items: center; padding-left: 11px; font-size: 14px; }
.search span { width: 168px; margin-left: 11px; letter-spacing: -.03px; }
.scene { align-self: flex-end; }
.view { width: 50px; padding-left: 16px; }
.apps { display: flex; height: 40px; }
.apps > div { width: 49px; display: grid; place-items: center; position: relative; }
.app-open { background: linear-gradient(#7cb8f0, #7cb8f0) center bottom / 35px 2px no-repeat; }
.apps .app-on { width: 42px; margin-left: 4px; background: #5c6968; border-bottom: 2px solid #7cb8f0; }
.app-face { position: absolute; left: 19px; top: 18px; }
.weather { margin-left: 77px; display: flex; align-items: center; gap: 8px; font-size: 14px; letter-spacing: -.4px; width: 85px; }
.tray { width: 167px; display: flex; gap: 6.200px; }
.tray svg { width: 18px; height: 18px; }
.clock { width: 62px; display: flex; flex-direction: column; align-items: center; font-size: 11.500px; line-height: 18px; letter-spacing: -.25px; margin-left: -1px; }
.notice { position: relative; width: 37px; margin-left: 13px; border-right: 1px solid #8a8d8c; height: 40px; padding-top: 9px; }
.notice b { position: absolute; left: 14px; top: 18px; font: 11px/16px "Open Sans", sans-serif; }
```
